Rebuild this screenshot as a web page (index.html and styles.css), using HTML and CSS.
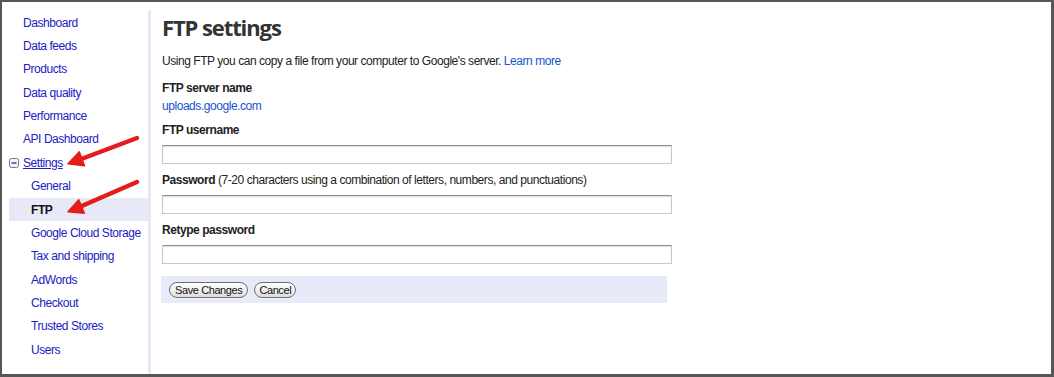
FILE: index.html
```html
<!DOCTYPE html>
<html lang="en">
<head>
    <meta charset="UTF-8">
    <title>FTP settings</title>
    <link rel="stylesheet" href="styles.css">
</head>
<body>
  <div class="frame">
      <div class="sidebar">
          <ul class="nav">
              <li><a href="#">Dashboard</a></li>
              <li><a href="#">Data feeds</a></li>
              <li><a href="#">Products</a></li>
              <li><a href="#">Data quality</a></li>
              <li><a href="#">Performance</a></li>
              <li><a href="#">API Dashboard</a></li>
              <li class="group">
                  <svg class="toggle" width="10" height="10" viewBox="0 0 10 10">
                      <rect x="0.5" y="0.5" width="9" height="9" rx="2" fill="#f2f4fa" stroke="#6d7694"/>
                      <line x1="2.5" y1="5" x2="7.5" y2="5" stroke="#3c4670" stroke-width="1.4"/>
                  </svg>
                  <a href="#" class="open">Settings</a>
              </li>
              <li class="sub"><a href="#">General</a></li>
              <li class="sub active"><span>FTP</span></li>
              <li class="sub"><a href="#">Google Cloud Storage</a></li>
              <li class="sub"><a href="#">Tax and shipping</a></li>
              <li class="sub"><a href="#">AdWords</a></li>
              <li class="sub"><a href="#">Checkout</a></li>
              <li class="sub"><a href="#">Trusted Stores</a></li>
              <li class="sub"><a href="#">Users</a></li>
          </ul>
      </div>
      <div class="content">
          <h1>FTP settings</h1>
          <p class="intro">Using FTP you can copy a file from your computer to Google's server. <a href="#">Learn more</a></p>
          <div class="info">
              <p class="label">FTP server name</p>
              <a href="#" class="server">uploads.google.com</a>
          </div>
          <div class="field">
              <label class="label">FTP username</label>
              <input type="text">
          </div>
          <div class="field">
              <label class="label">Password <span class="hint">(7-20 characters using a combination of letters, numbers, and punctuations)</span></label>
              <input type="password">
          </div>
          <div class="field">
              <label class="label">Retype password</label>
              <input type="password">
          </div>
          <div class="actions">
              <button class="btn">Save Changes</button>
              <button class="btn">Cancel</button>
          </div>
      </div>

      <!-- annotation arrows drawn over the screenshot -->
      <svg class="arrows" width="1054" height="377" viewBox="0 0 1054 377">
          <g stroke="#e41c1c" stroke-width="4.5" stroke-linecap="round" fill="#e41c1c">
              <line x1="137" y1="138" x2="80" y2="159.5"/>
              <polygon points="68,163.8 84.5,165.8 79.3,151.8" stroke-width="1.5" stroke-linejoin="round"/>
              <line x1="137" y1="182" x2="80" y2="206.8"/>
              <polygon points="68,211.8 84.3,213.2 78.8,199.8" stroke-width="1.5" stroke-linejoin="round"/>
          </g>
      </svg>
  </div>
</body>
</html>
```

FILE: styles.css
```css
/*General Style*/

*
{
    box-sizing: border-box;
    margin: 0;
    padding: 0;
}
body
{
    background-color: #fff;
    font-family: Arial, "Liberation Sans", sans-serif;
    font-size: 12px;
    letter-spacing: -0.45px;
    color: #222;
}
a
{
    text-decoration: none;
}

/*FRAME*/

.frame
{
    position: relative;
    display: flex;
    width: 1054px;
    height: 377px;
    border: 2px solid #585858;
    border-right-width: 3px;
    border-bottom-width: 3px;
    background-color: #fff;
}

/*SIDEBAR*/

.sidebar
{
    width: 149px;
    margin-top: 8px;
    border-right: 3px solid #e5e8f5;
}
.nav
{
    list-style: none;
    padding: 1px 0 0 7px;
}
.nav li
{
    display: flex;
    align-items: center;
    height: 23.36px;
    padding-left: 14px;
    white-space: nowrap;
}
.nav li a
{
    color: #2020c4;
}
.nav .group
{
    padding-left: 0;
}
.nav .toggle
{
    margin-right: 4px;
}
.nav .open
{
    text-decoration: underline;
}
.nav .sub
{
    padding-left: 22px;
}
.nav .active
{
    background-color: #e7eaf6;
    font-weight: bold;
    color: #111;
}

/*CONTENT*/

.content
{
    flex: 1;
    padding: 12px 0 0 11px;
}
h1
{
    font-family: "Open Sans", Arial, sans-serif;
    font-size: 22px;
    line-height: 26px;
    font-weight: 700;
    color: #333;
    letter-spacing: -1.1px;
}
.intro
{
    margin-top: 13px;
    line-height: 16px;
}
.intro a,
.server
{
    color: #1a52cf;
}
.info
{
    margin-top: 11px;
    line-height: 16px;
}
.server
{
    display: block;
    margin-top: 2px;
}
.label
{
    display: block;
    font-weight: bold;
    line-height: 16px;
    color: #222;
}
.hint
{
    font-weight: normal;
}
.field
{
    margin-top: 8px;
}
.field .label
{
    margin-bottom: 7px;
}
.field input
{
    display: block;
    width: 510px;
    height: 19px;
    border: 1px solid #c9c9c9;
    border-top-color: #8e8e8e;
    box-shadow: inset 0 1px 1px #ddd;
    background-color: #fff;
}

/*BUTTONS*/

.actions
{
    display: flex;
    align-items: center;
    gap: 6px;
    width: 506px;
    height: 27px;
    margin-top: 12px;
    margin-left: -1px;
    padding-left: 8px;
    background-color: #e7eaf8;
}
.btn
{
    height: 16px;
    padding: 0 5px;
    font-family: Arial, "Liberation Sans", sans-serif;
    font-size: 11px;
    letter-spacing: -0.4px;
    color: #111;
    border: 1px solid #6e6e6e;
    border-radius: 8px;
    background: linear-gradient(#ffffff, #f1f1f1 50%, #dcdcdc);
    box-shadow: 0 1px 0 #f6f6f6;
}
.btn + .btn
{
    padding: 0 4px;
}

/*ANNOTATIONS*/

.arrows
{
    position: absolute;
    top: -2px;
    left: -2px;
    pointer-events: none;
}
```
